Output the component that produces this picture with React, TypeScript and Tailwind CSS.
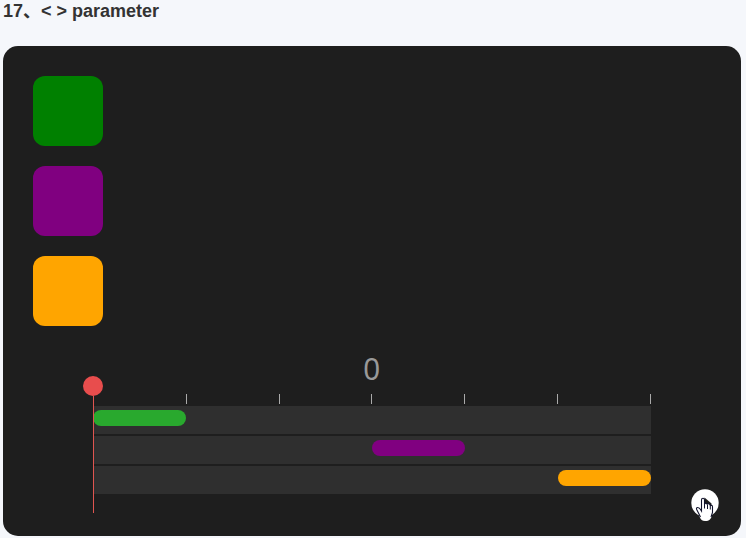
const tracks = [
  { offset: "ml-0", color: "bg-[#29a92e]" },
  { offset: "ml-[279px]", color: "bg-[#800080]" },
  { offset: "ml-[465px]", color: "bg-[#ffa500]" },
];

const boxes = ["bg-[#008000]", "bg-[#800080]", "bg-[#ffa500]"];

const tickMargins = ["ml-[93px]", "ml-[92px]", "ml-[91px]", "ml-[92px]", "ml-[92px]", "ml-[92px]"];

function Playhead() {
  return (
    <div className="absolute -left-[10px] top-0 flex w-5 flex-col items-center">
      <div className="h-5 w-5 rounded-full bg-[#e84d4d]" />
      <div className="ml-px h-[117px] w-px bg-[#e05550]" />
    </div>
  );
}

function PlayButton() {
  return (
    <svg className="absolute bottom-[12px] right-[19px]" width="34" height="38" viewBox="688 486 34 38">
      <circle cx="705" cy="503" r="13.7" fill="#fff" />
      <path d="M704.5 497.5l7 6v3h-7z" fill="#1e1e1e" />
      <path d="M699.5 513.5v3q1.5 4.5 5.5 4.5h2q3-.5 4.5-4l1-4z" fill="#fff" />
      <path
        d="M700.5 517l-3.8-7.5q-.7-2 1-2 1.8 0 3.8 3.5V500q0-1.7 1.5-1.7t1.5 1.7v4.5q0-1.3 1.3-1.3t1.4 1.5q.3-1.2 1.5-1t1.6 1.8q2.2-.6 2.2 1.5v5.5l-1.5 4.5"
        fill="#fff"
        stroke="#10122b"
        strokeWidth="1.1"
      />
      <path d="M704.5 504v4.5M707.5 505v4M710.3 506v3.5" fill="none" stroke="#10122b" />
    </svg>
  );
}

export default function App() {
  return (
    <main className="h-[538px] w-[746px] overflow-hidden bg-[#f5f7fb] pl-[3px] font-['Liberation_Sans','Noto_Sans_CJK_SC',sans-serif]">
      <h1 className="h-[46px] pt-[1px] text-[18px] font-bold leading-5 text-[#333]">17、&lt; &gt; parameter</h1>
      <section className="relative h-[490px] w-[738px] rounded-[15px] bg-[#1e1e1e] px-[30px] pt-[30px]">
        <div className="flex flex-col gap-5">
          {boxes.map((c) => (
            <div key={c} className={`h-[70px] w-[70px] rounded-[12px] ${c}`} />
          ))}
        </div>
        <div className="ml-[60px] mt-[26px] h-[42px] w-[558px] text-center text-[31px] leading-[36px] text-[#999]">
          <span className="inline-block scale-x-95">0</span>
        </div>
        <div className="relative -mt-[18px] ml-[60px] w-[558px] pt-[18px]">
          <div className="flex h-3 w-[558px]">
            {tickMargins.map((margin, i) => (
              <i key={i} className={`h-[10px] w-px bg-[#aaa] ${margin}`} />
            ))}
          </div>
          <div className="flex flex-col gap-[2px]">
            {tracks.map((t) => (
              <div key={t.color} className="h-7 bg-[#2f2f2f] pt-1">
                <div className={`h-4 w-[93px] rounded-full ${t.offset} ${t.color}`} />
              </div>
            ))}
          </div>
          <Playhead />
        </div>
        <PlayButton />
      </section>
    </main>
  );
}
